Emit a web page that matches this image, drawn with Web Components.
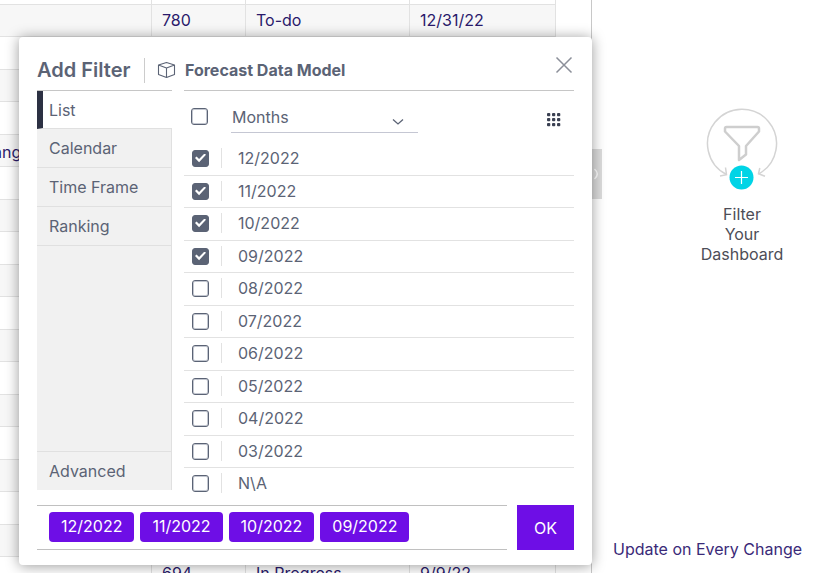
<!DOCTYPE html>
<html lang="en">
<head>
<meta charset="utf-8">
<meta name="viewport" content="width=device-width, initial-scale=1">
<title>Add Filter</title>
<style>
  body {
    margin: 0;
    font: 16px/20px Inter, "Liberation Sans", sans-serif;
    color: #5b6375;
    background: #fff;
  }
</style>
</head>
<body>
<dashboard-page>
  <data-grid></data-grid>
  <side-panel slot="side">
    <a href="#update" slot="footer">Update on Every Change</a>
  </side-panel>
  <filter-dialog slot="dialog" heading="Add Filter" model="Forecast Data Model">
    <filter-tab slot="tabs" active>List</filter-tab>
    <filter-tab slot="tabs">Calendar</filter-tab>
    <filter-tab slot="tabs">Time Frame</filter-tab>
    <filter-tab slot="tabs">Ranking</filter-tab>
    <filter-tab slot="advanced" last>Advanced</filter-tab>
    <member-list field="Months"></member-list>
    <filter-chip slot="chips">12/2022</filter-chip>
    <filter-chip slot="chips">11/2022</filter-chip>
    <filter-chip slot="chips">10/2022</filter-chip>
    <filter-chip slot="chips">09/2022</filter-chip>
  </filter-dialog>
</dashboard-page>

<script>
class DashboardPage extends HTMLElement {
    constructor() {
        super();
        this.root = this.attachShadow({ mode: "open" });
        this.root.innerHTML = `
          <style>
            :host {
              display: flex;
              position: relative;
              height: 100vh;
              overflow: hidden;
            }
            main {
              flex: 1;
              min-width: 0;
              overflow: hidden;
            }
          </style>
          <main><slot></slot></main>
          <slot name="side"></slot>
          <slot name="dialog"></slot>
        `;
    }
}

class DataGrid extends HTMLElement {
    constructor() {
        super();
        this.root = this.attachShadow({ mode: "open" });
    }

    connectedCallback() {
        const rows = Array.from({ length: 18 }, () => ["", "", "", ""]);
        rows[0] = ["", "780", "To-do", "12/31/22"];
        rows[4] = ["ang", "", "", ""];
        rows[17] = ["", "694", "In Progress", "9/9/22"];
        this.root.innerHTML = `
          <style>
            :host {
              display: block;
              color: #2a1a6b;
              margin: 0 35px 0 -8px;
            }
            table {
              width: 100%;
              table-layout: fixed;
              border-collapse: separate;
              border-spacing: 0;
            }
            th, td {
              box-sizing: border-box;
              height: 32px;
              padding: 0 10px 1px;
              line-height: 20px;
              text-align: left;
              white-space: nowrap;
              border-right: 1px solid #e2e2e2;
              border-bottom: 1px solid #e2e2e2;
            }
            th { height: 5px; line-height: 0; }
            td:first-child { padding: 2px 0 0 1px; }
            tbody tr:nth-child(odd) { background: #f7f7f7; }
            tbody tr:nth-child(even) td { height: 33px; }
          </style>
          <table>
            <colgroup><col style="width: 160px"><col style="width: 94px"><col style="width: 164px"><col></colgroup>
            <thead><tr><th></th><th></th><th></th><th></th></tr></thead>
            <tbody>
              ${rows.map(r => `<tr>${r.map(c => `<td>${c}</td>`).join("")}</tr>`).join("")}
            </tbody>
          </table>
        `;
    }
}

class SidePanel extends HTMLElement {
    constructor() {
        super();
        this.root = this.attachShadow({ mode: "open" });
        this.root.innerHTML = `
          <style>
            :host {
              display: flex;
              flex-direction: column;
              justify-content: space-between;
              position: relative;
              box-sizing: border-box;
              width: 238px;
              padding: 106px 0 14px 21px;
              border-left: 1px solid #c8c8c8;
            }
            .handle {
              position: absolute;
              left: 0;
              top: 149px;
              width: 10px;
              height: 50px;
              padding: 0;
              border: 0;
              background: #dcdcdc;
            }
            .handle svg { display: block; margin: auto; }
            .add {
              display: flex;
              flex-direction: column;
              align-items: center;
              gap: 12px;
              width: 100px;
              margin-left: 79px;
              padding: 0;
              border: 0;
              background: none;
              font: inherit;
              color: #4d4d57;
            }
            ::slotted(a) {
              color: #3a2a78;
              text-decoration: none;
              white-space: nowrap;
            }
          </style>
          <button class="handle" aria-label="Collapse panel">
            <svg width="10" height="14" viewBox="0 0 10 14" fill="none" stroke="#fff" stroke-width="1.5"><path d="M2.500 2q5.500 5 0 10"/></svg>
          </button>
          <button class="add">
            <svg width="76" height="86" viewBox="0 0 76 86" fill="none" stroke="#d4d4d4">
              <path d="M22.500 68.500A34.500 34.500 0 1 1 54.500 68" stroke-width="1.500"/>
              <path d="M21.500 61.500l1 7.200-6.500 1.300M55.800 62l-1.300 5.800 6.500 2.500" stroke-width="1.500"/>
              <path d="M22.500 21h31q1.500 0 1.500 1.500v3L42 40v8.500L35 54V40L21 25.500v-3q0-1.500 1.500-1.500z" stroke="#cecece" stroke-width="2.500" stroke-linejoin="round"/>
              <circle cx="37.500" cy="71.500" r="12" fill="#00d4e6" stroke="none"/>
              <path d="M31 71.500h13M37.500 65v13" stroke="#fff" stroke-width="1.200"/>
            </svg>
            <span>Filter<br>Your<br>Dashboard</span>
          </button>
          <slot name="footer"></slot>
        `;
    }
}

class FilterDialog extends HTMLElement {
    constructor() {
        super();
        this.root = this.attachShadow({ mode: "open" });
    }

    connectedCallback() {
        this.root.innerHTML = `
          <style>
            :host {
              display: block;
              position: absolute;
              left: 19px;
              top: 37px;
              width: 573px;
              max-width: calc(100vw - 38px);
              box-sizing: border-box;
              padding: 0 18px 15px;
              background: #fff;
              border-radius: 4px;
              box-shadow: 0 1px 14px rgba(0, 0, 0, 0.4);
            }
            header {
              display: flex;
              align-items: center;
              box-sizing: border-box;
              height: 53px;
              padding-top: 13px;
            }
            h2, h3 { margin: 0; white-space: nowrap; }
            h2 {
              box-sizing: border-box;
              width: 107px;
              font-size: 20px;
              font-weight: 600;
              line-height: 26px;
            }
            .model {
              display: flex;
              align-items: center;
              gap: 9px;
              height: 25px;
              padding-left: 12px;
              border-left: 1px solid #ccc;
            }
            h3 { font-size: 16px; font-weight: 700; }
            .close {
              align-self: flex-start;
              margin-left: auto;
              padding: 5px 0 0;
              border: 0;
              background: none;
            }
            .close svg { display: block; }
            .body {
              display: grid;
              grid-template-columns: 135px 1fr;
              column-gap: 12px;
              height: 410px;
            }
            nav {
              display: flex;
              flex-direction: column;
              height: 400px;
              box-sizing: border-box;
              border-top: 1px solid #c6c6c6;
              background: #f1f1f1;
            }
            .fill {
              flex: 1;
              border-right: 1px solid #e0e0e0;
            }
            footer {
              display: flex;
              gap: 10px;
              margin-top: 5px;
            }
            .chips {
              flex: 1;
              display: flex;
              align-items: center;
              gap: 6px;
              padding: 0 12px 1px;
              border: solid #c0c0c0;
              border-width: 1px 0;
            }
            .ok {
              width: 57px;
              height: 45px;
              padding: 0;
              border: 0;
              background: #6e0ee6;
              color: #fff;
              font: inherit;
            }
          </style>
          <header>
            <h2>${this.getAttribute("heading")}</h2>
            <div class="model">
              <svg width="19" height="18" viewBox="0 0 19 18" fill="none" stroke="#5b6375" stroke-width="1.100" stroke-linejoin="round"><path d="M9.500 1.500l8 2.500v9.500l-8 3-8-3V4zM1.500 4l8 3 8-3M9.500 7v9.500"/></svg>
              <h3>${this.getAttribute("model")}</h3>
            </div>
            <button class="close" aria-label="Close">
              <svg width="20" height="20" viewBox="0 0 20 20" stroke="#8b8f99" stroke-width="1.500"><path d="M2.500 2.500l15 15M17.500 2.500l-15 15"/></svg>
            </button>
          </header>
          <div class="body">
            <nav>
              <slot name="tabs"></slot>
              <div class="fill"></div>
              <slot name="advanced"></slot>
            </nav>
            <slot></slot>
          </div>
          <footer>
            <div class="chips"><slot name="chips"></slot></div>
            <button class="ok">OK</button>
          </footer>
        `;
    }
}

class FilterTab extends HTMLElement {
    constructor() {
        super();
        this.root = this.attachShadow({ mode: "open" });
        this.root.innerHTML = `
          <style>
            :host { display: block; }
            button {
              display: block;
              box-sizing: border-box;
              width: 100%;
              height: 39px;
              padding: 0 0 0 12px;
              border: solid #e0e0e0;
              border-width: 0 1px 1px 0;
              background: #f1f1f1;
              color: inherit;
              font: inherit;
              text-align: left;
            }
            :host([active]) button {
              height: 38px;
              padding-left: 6px;
              border-left: 6px solid #2c3143;
              border-right: 0;
              background: #fff;
            }
            :host([last]) button { border-width: 1px 1px 0 0; }
          </style>
          <button><slot></slot></button>
        `;
    }
}

class CheckMark extends HTMLElement {
    constructor() {
        super();
        this.root = this.attachShadow({ mode: "open" });
    }

    connectedCallback() {
        this.root.innerHTML = `
          <style>
            :host { display: block; }
            input {
              appearance: none;
              display: grid;
              place-items: center;
              box-sizing: border-box;
              width: 17px;
              height: 17px;
              margin: 0;
              border: 1px solid #5b6375;
              border-radius: 3px;
              background: #fff;
              box-shadow: inset 0 0 0 1px #c3c7d0;
            }
            input:checked { background: #5b6375; box-shadow: none; }
            input:checked::after {
              content: "";
              width: 11px;
              height: 9px;
              background: #fff;
              clip-path: polygon(0 50%, 14% 33%, 37% 62%, 86% 0, 100% 14%, 37% 96%);
            }
          </style>
          <input type="checkbox" aria-label="${this.getAttribute("label")}" ${this.hasAttribute("checked") ? "checked" : ""}>
        `;
    }
}

class MemberList extends HTMLElement {
    constructor() {
        super();
        this.root = this.attachShadow({ mode: "open" });
    }

    connectedCallback() {
        const field = this.getAttribute("field");
        const months = ["12", "11", "10", "09", "08", "07", "06", "05", "04", "03"];
        const members = [...months.map(m => `${m}/2022`), "N\\A"];
        const dots = [2, 7, 12].map(y => [2, 7, 12].map(x =>
            `<rect x="${x}" y="${y}" width="3.300" height="3.300" rx="1"/>`).join("")).join("");
        this.root.innerHTML = `
          <style>
            :host {
              display: block;
              min-width: 0;
              border-top: 1px solid #c6c6c6;
            }
            .head {
              display: flex;
              align-items: center;
              box-sizing: border-box;
              height: 52px;
              padding: 0 12px 2px 7px;
            }
            .field {
              display: grid;
              align-items: center;
              width: 187px;
              height: 33px;
              margin: 0 auto 0 23px;
              border-bottom: 1px solid #c5c7d3;
              box-sizing: border-box;
            }
            select, .field svg { grid-area: 1 / 1; }
            select {
              appearance: none;
              width: 100%;
              padding: 2px 1px 0;
              border: 0;
              background: none;
              color: inherit;
              font: inherit;
            }
            .field svg {
              justify-self: end;
              margin: 12px 14px 0 0;
              pointer-events: none;
            }
            .view {
              padding: 0;
              border: 0;
              background: none;
            }
            .view svg { display: block; margin-top: 7px; }
            ul {
              margin: 0;
              padding: 0;
              list-style: none;
            }
            li {
              display: flex;
              align-items: center;
              box-sizing: border-box;
              height: 33px;
              padding: 0 0 2px 8px;
              border-bottom: 1px solid #e2e2e2;
            }
            li:nth-child(even) { height: 32px; padding-bottom: 1px; }
            li:last-child { height: 32px; border-bottom: 0; }
            li span {
              margin-left: 12px;
              padding-left: 16px;
              border-left: 1px solid #e2e2e2;
            }
          </style>
          <div class="head">
            <check-mark label="Select all"></check-mark>
            <div class="field">
              <select aria-label="Level"><option>${field}</option></select>
              <svg width="12" height="8" viewBox="0 0 12 8" fill="none" stroke="#5b6375" stroke-width="1.300"><path d="M1 1.500l5 4.500 5-4.500"/></svg>
            </div>
            <button class="view" aria-label="Grid view"><svg width="17" height="17" viewBox="0 0 17 17" fill="#3a4052">${dots}</svg></button>
          </div>
          <ul>
            ${members.map((m, i) => `<li><check-mark label="${m}" ${i < 4 ? "checked" : ""}></check-mark><span>${m}</span></li>`).join("")}
          </ul>
        `;
    }
}

class FilterChip extends HTMLElement {
    constructor() {
        super();
        this.root = this.attachShadow({ mode: "open" });
        this.root.innerHTML = `
          <style>
            :host {
              display: block;
              padding: 4px 12px 6px;
              border-radius: 4px;
              background: #6e0ee6;
              color: #fff;
            }
          </style>
          <slot></slot>
        `;
    }
}

customElements.define("dashboard-page", DashboardPage);
customElements.define("data-grid", DataGrid);
customElements.define("side-panel", SidePanel);
customElements.define("check-mark", CheckMark);
customElements.define("member-list", MemberList);
customElements.define("filter-tab", FilterTab);
customElements.define("filter-chip", FilterChip);
customElements.define("filter-dialog", FilterDialog);
</script>
</body>
</html>
